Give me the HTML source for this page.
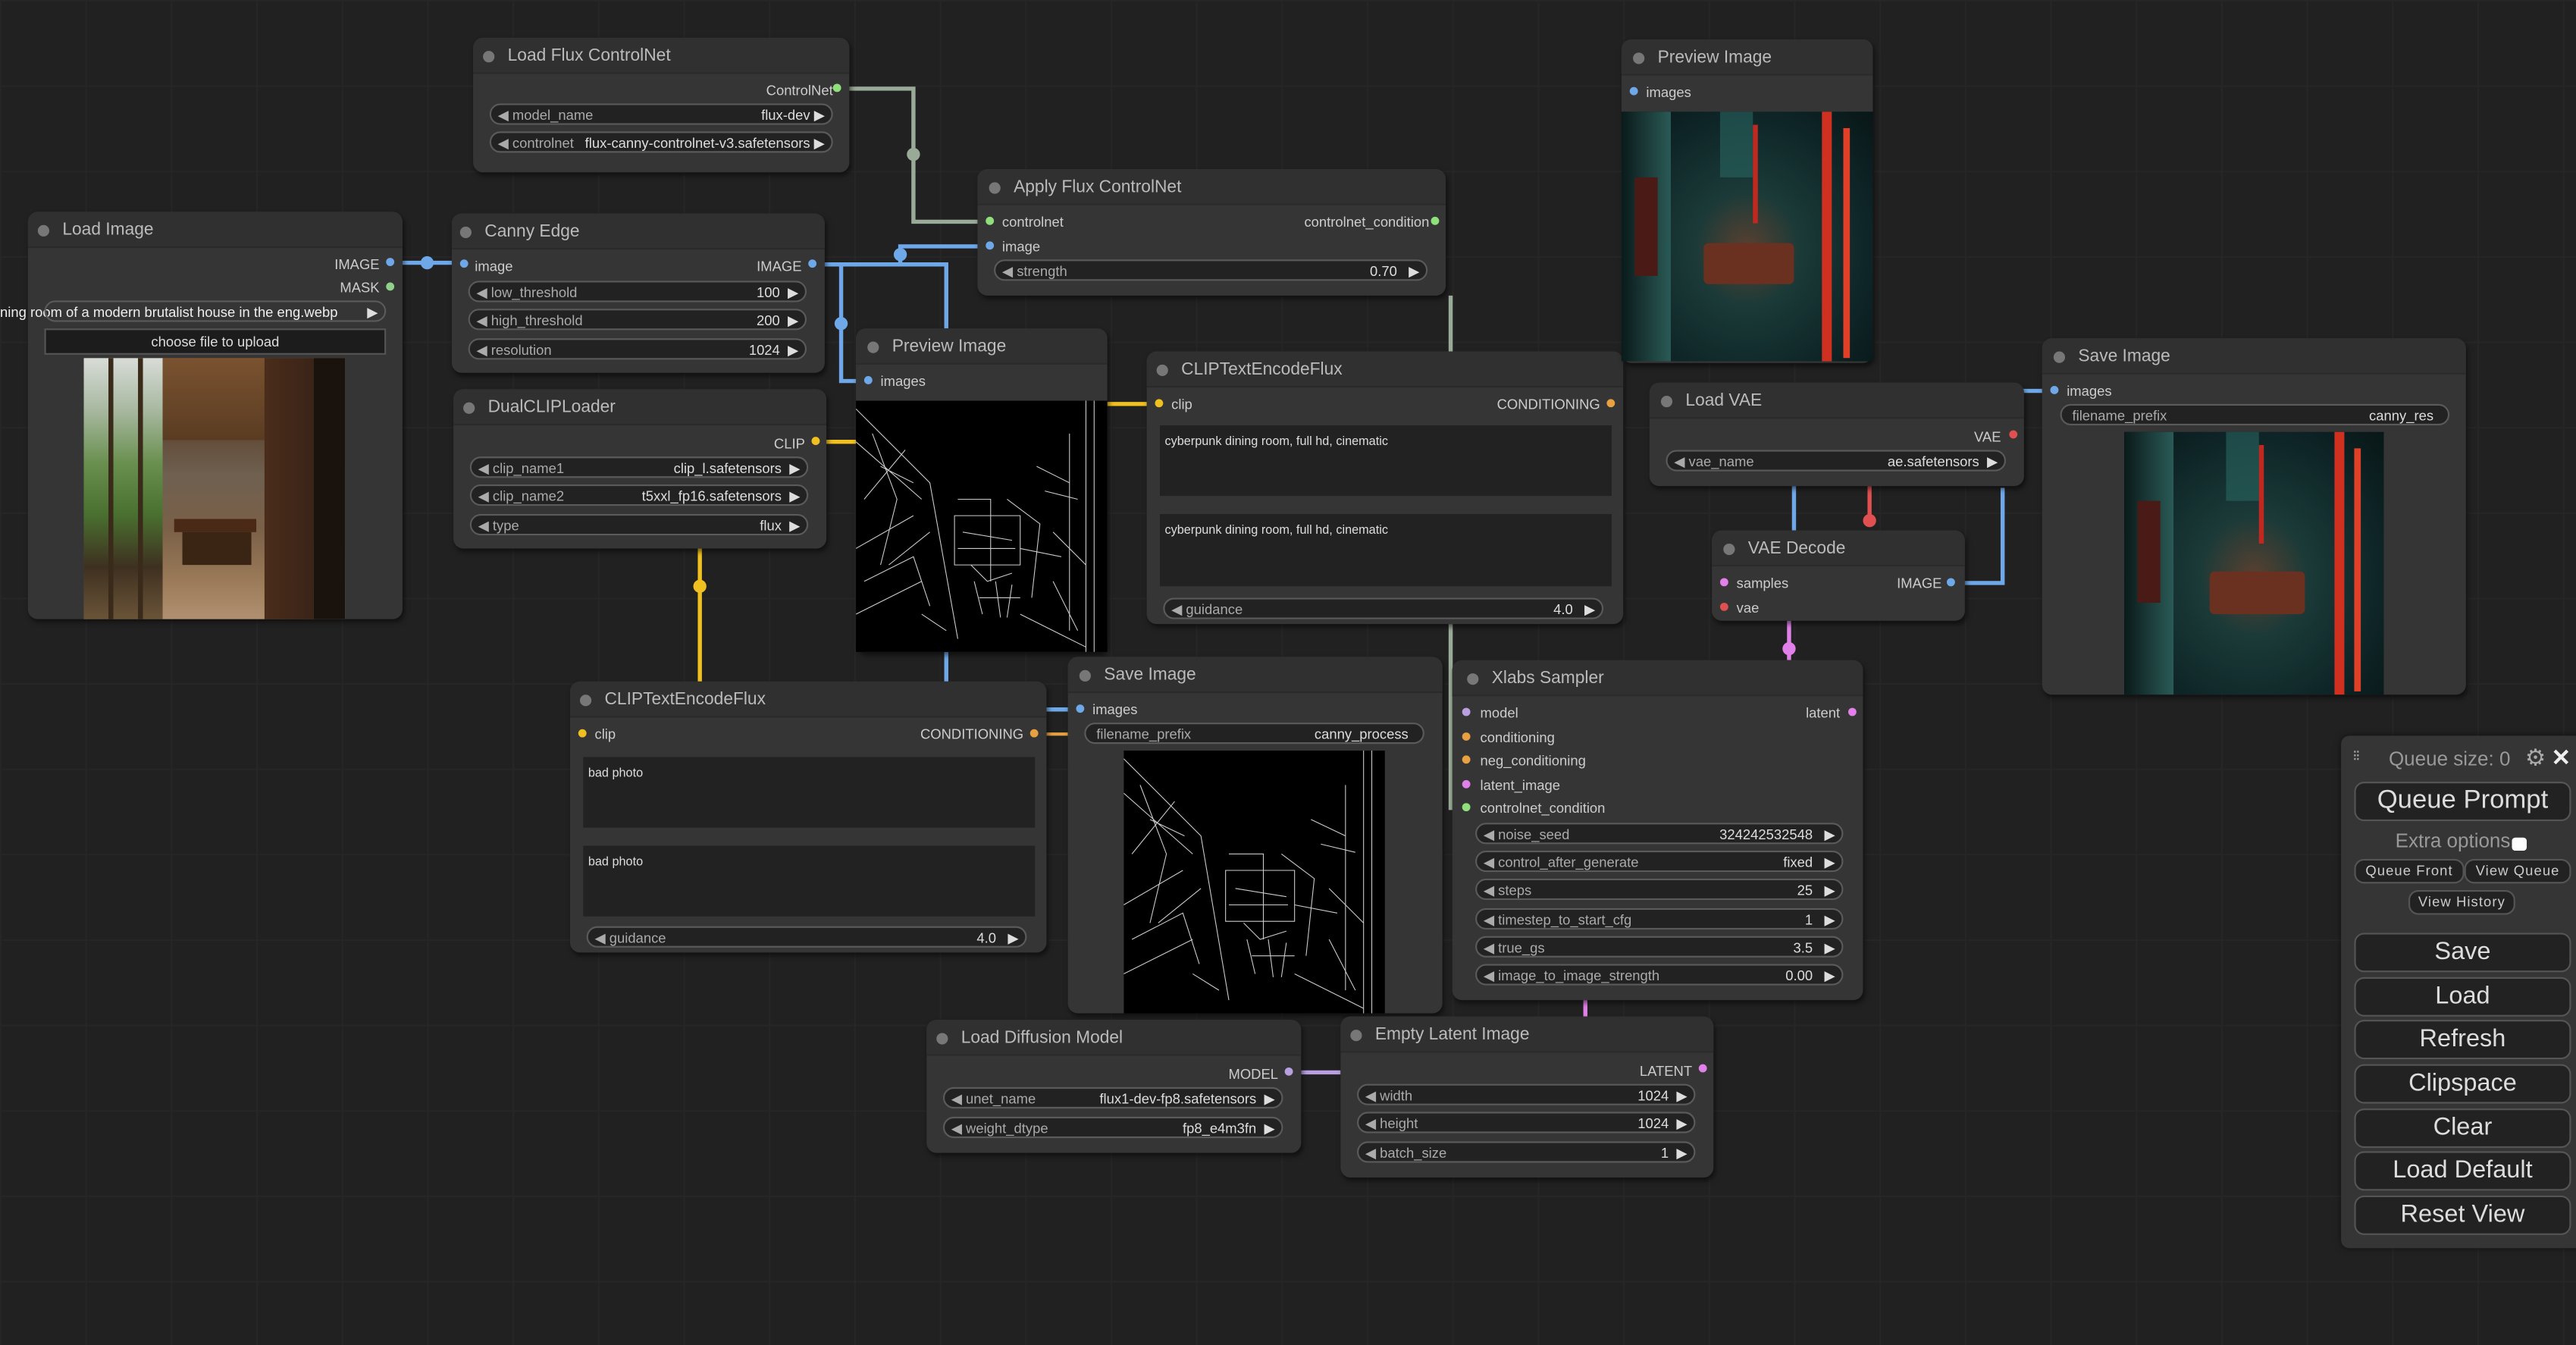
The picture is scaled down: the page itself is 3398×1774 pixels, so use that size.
<!DOCTYPE html>
<html><head><meta charset="utf-8"><style>
html,body{margin:0;padding:0;background:#202020;overflow:hidden}
#c{position:absolute;left:0;top:0;width:1568px;height:819px;transform:scale(2.16709,2.16606);transform-origin:0 0;background-color:#212121;
background-image:linear-gradient(#262626 1px,transparent 1px),linear-gradient(90deg,#262626 1px,transparent 1px);background-size:52px 52px;
font-family:"Liberation Sans",sans-serif;overflow:hidden}
.n{position:absolute;background:#353535;border-radius:6px;box-shadow:1px 2px 3px rgba(0,0,0,.5)}
.n:before{content:"";position:absolute;left:0;right:0;top:0;height:21px;background:#303030;border-radius:6px 6px 0 0;border-bottom:1px solid #2a2a2a}
.t{position:absolute;font-size:10.5px;color:#bbb;white-space:nowrap}
.t:before{content:"";position:absolute;left:-15px;top:3px;width:7px;height:7px;border-radius:50%;background:#777}
.s{position:absolute;font-size:8.5px;color:#ccc;white-space:nowrap;line-height:10px}
.d{position:absolute;width:5px;height:5px;border-radius:50%}
.w{position:absolute;height:13px;border:1px solid #5a5a5a;background:#222;border-radius:7px;box-sizing:border-box;font-size:8.5px;color:#aaa;white-space:nowrap;overflow:hidden}
.w .l{position:absolute;left:4px;top:1px;line-height:10px}
.w .v{position:absolute;right:4px;top:1px;line-height:10px;color:#ddd}
.ta{position:absolute;background:#222;font-size:7.5px;color:#ddd;padding:5px 3px;box-sizing:border-box}
.b{position:absolute;border:1px solid #555;background:#222;border-radius:6px;box-sizing:border-box;color:#ddd;text-align:center;font-family:"Liberation Sans",sans-serif}
</style></head><body><div id="c">

<svg width="1568" height="819" style="position:absolute;left:0;top:0" fill="none">
<g stroke="#6ea8e8" stroke-width="2.5">
<path d="M238 160H282"/><path d="M495 161H576V200"/><path d="M512 161V232H529"/><path d="M548 161V150H603"/><path d="M576 397V415"/><path d="M637 432H657"/>
<path d="M1188 355H1219V297"/><path d="M1219 238H1250"/><path d="M1092 296V323"/>
</g>
<g fill="#6ea8e8"><circle cx="260" cy="160" r="4"/><circle cx="548" cy="155" r="4"/><circle cx="512" cy="197" r="4"/></g>
<path d="M510 54H556V135H603" stroke="#9aaa98" stroke-width="2.5"/><circle cx="556" cy="94" r="4" fill="#9aaa98"/>
<path d="M883 180V214M883 380V492H893" stroke="#9aaa98" stroke-width="2.5"/>
<g stroke="#f0c020" stroke-width="2.5"><path d="M497 269H521"/><path d="M674 246H705"/><path d="M426 334V415"/></g>
<circle cx="426" cy="357" r="4" fill="#f0c020"/>
<g stroke="#e8a040" stroke-width="2"><path d="M637 447H650"/><path d="M888 449H893M888 463H893"/></g>
<path d="M1138 296V318" stroke="#e05050" stroke-width="2.5"/><circle cx="1138" cy="317" r="4" fill="#e05050"/>
<path d="M1089 378V402" stroke="#e080e8" stroke-width="2.5"/><circle cx="1089" cy="395" r="4" fill="#e080e8"/>
<path d="M965 609V619" stroke="#e080e8" stroke-width="2.5"/>
<path d="M792 653H816" stroke="#b8a0e0" stroke-width="2.5"/>
</svg>

<!-- Load Flux ControlNet -->
<div class="n" style="left:288px;top:23px;width:229px;height:82px"></div>
<div class="t" style="left:309px;top:28px">Load Flux ControlNet</div>
<div class="s" style="right:1061px;top:50px">ControlNet</div><div class="d" style="left:507px;top:51px;background:#8fe07a"></div>
<div class="w" style="left:298px;top:63px;width:209px"><span class="l">◀ model_name</span><span class="v">flux-dev ▶</span></div>
<div class="w" style="left:298px;top:80px;width:209px"><span class="l">◀ controlnet</span><span class="v">flux-canny-controlnet-v3.safetensors ▶</span></div>

<!-- Load Image -->
<div class="n" style="left:17px;top:129px;width:228px;height:248px"></div>
<div class="t" style="left:38px;top:134px">Load Image</div>
<div class="s" style="right:1337px;top:156px">IMAGE</div><div class="d" style="left:235px;top:157px;background:#6ea8e8"></div>
<div class="s" style="right:1337px;top:170px">MASK</div><div class="d" style="left:235px;top:172px;background:#8fd08a"></div>
<div class="s" style="left:0;top:185px;color:#eee">ning room of a modern brutalist house in the eng.webp</div>
<div class="w" style="left:27px;top:183px;width:208px;background:transparent"><span class="v">▶</span></div>
<div class="b" style="left:27px;top:200px;width:208px;height:16px;border-radius:0;font-size:8.5px;line-height:14px;background:#1c1c1c">choose file to upload</div>
<div style="position:absolute;left:51px;top:218px;width:159px;height:159px;overflow:hidden;background:linear-gradient(180deg,#6a4a2c 0%,#5a3e28 20%,#6f6050 45%,#7a6048 65%,#9a7a58 85%,#b09070 100%)">
<div style="position:absolute;left:0;top:0;width:48px;height:159px;background:linear-gradient(180deg,#d8dcd8 0%,#a8b8a0 20%,#6a9050 40%,#4a7030 60%,#3e3020 80%,#6a5438 100%)"></div>
<div style="position:absolute;left:15px;top:0;width:3px;height:159px;background:#3a2a1a"></div>
<div style="position:absolute;left:33px;top:0;width:3px;height:159px;background:#3a2a1a"></div>
<div style="position:absolute;left:48px;top:0;width:62px;height:50px;background:linear-gradient(180deg,#7a5230,#5a3c22)"></div>
<div style="position:absolute;left:110px;top:0;width:30px;height:159px;background:linear-gradient(90deg,#4a2c1a,#3a2418)"></div>
<div style="position:absolute;left:140px;top:0;width:19px;height:159px;background:#1a120c"></div>
<div style="position:absolute;left:55px;top:98px;width:50px;height:8px;background:#4a2a16"></div>
<div style="position:absolute;left:60px;top:106px;width:42px;height:20px;background:#3a2414"></div>
</div>

<!-- Canny Edge -->
<div class="n" style="left:275px;top:130px;width:227px;height:97px"></div>
<div class="t" style="left:295px;top:135px">Canny Edge</div>
<div class="d" style="left:280px;top:158px;background:#6ea8e8"></div><div class="s" style="left:289px;top:157px">image</div>
<div class="s" style="right:1080px;top:157px">IMAGE</div><div class="d" style="left:492px;top:158px;background:#6ea8e8"></div>
<div class="w" style="left:285px;top:171px;width:206px"><span class="l">◀ low_threshold</span><span class="v">100 &nbsp;▶</span></div>
<div class="w" style="left:285px;top:188px;width:206px"><span class="l">◀ high_threshold</span><span class="v">200 &nbsp;▶</span></div>
<div class="w" style="left:285px;top:206px;width:206px"><span class="l">◀ resolution</span><span class="v">1024 &nbsp;▶</span></div>

<!-- DualCLIPLoader -->
<div class="n" style="left:276px;top:237px;width:227px;height:97px"></div>
<div class="t" style="left:297px;top:242px">DualCLIPLoader</div>
<div class="s" style="right:1078px;top:265px">CLIP</div><div class="d" style="left:494px;top:266px;background:#f0c020"></div>
<div class="w" style="left:286px;top:278px;width:206px"><span class="l">◀ clip_name1</span><span class="v">clip_l.safetensors &nbsp;▶</span></div>
<div class="w" style="left:286px;top:295px;width:206px"><span class="l">◀ clip_name2</span><span class="v">t5xxl_fp16.safetensors &nbsp;▶</span></div>
<div class="w" style="left:286px;top:313px;width:206px"><span class="l">◀ type</span><span class="v">flux &nbsp;▶</span></div>

<!-- Preview Image canny -->
<div class="n" style="left:521px;top:200px;width:153px;height:197px"></div>
<div class="t" style="left:543px;top:205px">Preview Image</div>
<div class="d" style="left:526px;top:229px;background:#6ea8e8"></div><div class="s" style="left:536px;top:227px">images</div>
<svg style="position:absolute;left:521px;top:244px" width="153" height="153"><rect width="153" height="153" fill="#000"/>
<g stroke="#ccc" stroke-width=".5" fill="none"><path d="M0 5L45 50L62 145M0 25L40 60M5 60L30 30M20 100L45 80M0 130L40 110M0 90L35 70M62 60L82 60L82 110M92 60L112 75L107 120M120 80L140 100M100 130L140 150M130 20V140M145 0V153M140 0V153M70 100l10 10l15-5M10 20l15 40l-10 40M60 70h40v30h-40zM65 80l30 5M62 90h35M72 110l5 20M85 110l3 22M95 112l-3 20M75 120h25M15 40l20 10M5 110l30-15l10 30M40 130l15 10M110 40l20 10M115 55l20 5M100 90l25 5M120 110l15 30"/></g></svg>

<!-- Apply Flux ControlNet -->
<div class="n" style="left:595px;top:103px;width:285px;height:77px"></div>
<div class="t" style="left:617px;top:108px">Apply Flux ControlNet</div>
<div class="d" style="left:600px;top:132px;background:#8fe07a"></div><div class="s" style="left:610px;top:130px">controlnet</div>
<div class="s" style="right:698px;top:130px">controlnet_condition</div><div class="d" style="left:871px;top:132px;background:#8fe07a"></div>
<div class="d" style="left:600px;top:147px;background:#6ea8e8"></div><div class="s" style="left:610px;top:145px">image</div>
<div class="w" style="left:605px;top:158px;width:264px"><span class="l">◀ strength</span><span class="v">0.70 &nbsp;&nbsp;▶</span></div>

<!-- CLIPTextEncodeFlux top -->
<div class="n" style="left:698px;top:214px;width:290px;height:166px"></div>
<div class="t" style="left:719px;top:219px">CLIPTextEncodeFlux</div>
<div class="d" style="left:703px;top:243px;background:#f0c020"></div><div class="s" style="left:713px;top:241px">clip</div>
<div class="s" style="right:594px;top:241px">CONDITIONING</div><div class="d" style="left:978px;top:243px;background:#e8a040"></div>
<div class="ta" style="left:706px;top:259px;width:275px;height:43px">cyberpunk dining room, full hd, cinematic</div>
<div class="ta" style="left:706px;top:313px;width:275px;height:44px">cyberpunk dining room, full hd, cinematic</div>
<div class="w" style="left:708px;top:364px;width:268px"><span class="l">◀ guidance</span><span class="v">4.0 &nbsp;&nbsp;▶</span></div>

<!-- Preview Image top right -->
<div class="n" style="left:987px;top:24px;width:153px;height:197px"></div>
<div class="t" style="left:1009px;top:29px">Preview Image</div>
<div class="d" style="left:992px;top:53px;background:#6ea8e8"></div><div class="s" style="left:1002px;top:51px">images</div>
<div style="position:absolute;left:987px;top:68px;width:153px;height:152px;overflow:hidden;background:radial-gradient(ellipse at 50% 55%,#5a4030 0%,#1a3a38 30%,#0e2426 70%,#081616 100%)">
<div style="position:absolute;left:0;top:0;width:30px;height:152px;background:linear-gradient(90deg,#0a1a1a,#2a5a56)"></div>
<div style="position:absolute;left:8px;top:40px;width:14px;height:60px;background:#4a1a16"></div>
<div style="position:absolute;left:122px;top:0;width:6px;height:152px;background:#d03020"></div>
<div style="position:absolute;left:135px;top:10px;width:4px;height:140px;background:#e04028"></div>
<div style="position:absolute;left:80px;top:8px;width:3px;height:60px;background:#c02820"></div>
<div style="position:absolute;left:60px;top:0;width:20px;height:40px;background:#2a6660;opacity:.6"></div>
<div style="position:absolute;left:50px;top:80px;width:55px;height:25px;background:#6a3020;border-radius:3px"></div>
</div>

<!-- Load VAE -->
<div class="n" style="left:1004px;top:233px;width:228px;height:63px"></div>
<div class="t" style="left:1026px;top:238px">Load VAE</div>
<div class="s" style="right:350px;top:261px">VAE</div><div class="d" style="left:1223px;top:262px;background:#e05050"></div>
<div class="w" style="left:1014px;top:274px;width:207px"><span class="l">◀ vae_name</span><span class="v">ae.safetensors &nbsp;▶</span></div>

<!-- Save Image right -->
<div class="n" style="left:1243px;top:206px;width:258px;height:217px"></div>
<div class="t" style="left:1265px;top:211px">Save Image</div>
<div class="d" style="left:1248px;top:235px;background:#6ea8e8"></div><div class="s" style="left:1258px;top:233px">images</div>
<div class="w" style="left:1254px;top:246px;width:237px"><span class="l">&nbsp;filename_prefix</span><span class="v">canny_res &nbsp;</span></div>
<div style="position:absolute;left:1293px;top:263px;width:158px;height:160px;overflow:hidden;background:radial-gradient(ellipse at 50% 55%,#5a4030 0%,#1a3a38 30%,#0e2426 70%,#081616 100%)">
<div style="position:absolute;left:0;top:0;width:30px;height:160px;background:linear-gradient(90deg,#0a1a1a,#2a5a56)"></div>
<div style="position:absolute;left:8px;top:42px;width:14px;height:62px;background:#4a1a16"></div>
<div style="position:absolute;left:128px;top:0;width:6px;height:160px;background:#d03020"></div>
<div style="position:absolute;left:140px;top:10px;width:4px;height:148px;background:#e04028"></div>
<div style="position:absolute;left:82px;top:8px;width:3px;height:60px;background:#c02820"></div>
<div style="position:absolute;left:62px;top:0;width:20px;height:42px;background:#2a6660;opacity:.6"></div>
<div style="position:absolute;left:52px;top:85px;width:58px;height:26px;background:#6a3020;border-radius:3px"></div>
</div>

<!-- VAE Decode -->
<div class="n" style="left:1042px;top:323px;width:154px;height:55px"></div>
<div class="t" style="left:1064px;top:328px">VAE Decode</div>
<div class="d" style="left:1047px;top:352px;background:#e080e8"></div><div class="s" style="left:1057px;top:350px">samples</div>
<div class="s" style="right:386px;top:350px">IMAGE</div><div class="d" style="left:1185px;top:352px;background:#6ea8e8"></div>
<div class="d" style="left:1047px;top:367px;background:#e05050"></div><div class="s" style="left:1057px;top:365px">vae</div>

<!-- CLIPTextEncodeFlux bottom -->
<div class="n" style="left:347px;top:415px;width:290px;height:165px"></div>
<div class="t" style="left:368px;top:420px">CLIPTextEncodeFlux</div>
<div class="d" style="left:352px;top:444px;background:#f0c020"></div><div class="s" style="left:362px;top:442px">clip</div>
<div class="s" style="right:945px;top:442px">CONDITIONING</div><div class="d" style="left:627px;top:444px;background:#e8a040"></div>
<div class="ta" style="left:355px;top:461px;width:275px;height:43px">bad photo</div>
<div class="ta" style="left:355px;top:515px;width:275px;height:43px">bad photo</div>
<div class="w" style="left:357px;top:564px;width:268px"><span class="l">◀ guidance</span><span class="v">4.0 &nbsp;&nbsp;▶</span></div>

<!-- Save Image middle -->
<div class="n" style="left:650px;top:400px;width:228px;height:217px"></div>
<div class="t" style="left:672px;top:405px">Save Image</div>
<div class="d" style="left:655px;top:429px;background:#6ea8e8"></div><div class="s" style="left:665px;top:427px">images</div>
<div class="w" style="left:660px;top:440px;width:207px"><span class="l">&nbsp;filename_prefix</span><span class="v">canny_process &nbsp;</span></div>
<svg style="position:absolute;left:684px;top:457px" width="159" height="160"><rect width="159" height="160" fill="#000"/>
<g stroke="#ccc" stroke-width=".5" fill="none"><path d="M0 5L47 52L64 152M0 26L42 63M5 63L31 31M21 105L47 84M0 136L42 115M0 94L36 73M64 63L85 63L85 115M96 63L116 78L111 125M125 84L146 105M104 136L146 157M135 21V146M151 0V160M146 0V160M73 105l10 10l16-5M10 21l16 42l-10 42M62 73h42v31h-42zM68 84l31 5M64 94h36M75 115l5 21M88 115l3 23M99 117l-3 21M78 125h26M16 42l21 10M5 115l31-16l10 31M42 136l16 10M114 42l21 10M120 57l21 5M104 94l26 5M125 115l16 31"/></g></svg>

<!-- Xlabs Sampler -->
<div class="n" style="left:884px;top:402px;width:250px;height:207px"></div>
<div class="t" style="left:908px;top:407px">Xlabs Sampler</div>
<div class="d" style="left:890px;top:431px;background:#b8a0e0"></div><div class="s" style="left:901px;top:429px">model</div>
<div class="s" style="right:448px;top:429px">latent</div><div class="d" style="left:1125px;top:431px;background:#e080e8"></div>
<div class="d" style="left:890px;top:446px;background:#e8a040"></div><div class="s" style="left:901px;top:444px">conditioning</div>
<div class="d" style="left:890px;top:460px;background:#e8a040"></div><div class="s" style="left:901px;top:458px">neg_conditioning</div>
<div class="d" style="left:890px;top:475px;background:#e080e8"></div><div class="s" style="left:901px;top:473px">latent_image</div>
<div class="d" style="left:890px;top:489px;background:#8fe07a"></div><div class="s" style="left:901px;top:487px">controlnet_condition</div>
<div class="w" style="left:898px;top:501px;width:224px"><span class="l">◀ noise_seed</span><span class="v">324242532548 &nbsp;&nbsp;▶</span></div>
<div class="w" style="left:898px;top:518px;width:224px"><span class="l">◀ control_after_generate</span><span class="v">fixed &nbsp;&nbsp;▶</span></div>
<div class="w" style="left:898px;top:535px;width:224px"><span class="l">◀ steps</span><span class="v">25 &nbsp;&nbsp;▶</span></div>
<div class="w" style="left:898px;top:553px;width:224px"><span class="l">◀ timestep_to_start_cfg</span><span class="v">1 &nbsp;&nbsp;▶</span></div>
<div class="w" style="left:898px;top:570px;width:224px"><span class="l">◀ true_gs</span><span class="v">3.5 &nbsp;&nbsp;▶</span></div>
<div class="w" style="left:898px;top:587px;width:224px"><span class="l">◀ image_to_image_strength</span><span class="v">0.00 &nbsp;&nbsp;▶</span></div>

<!-- Load Diffusion Model -->
<div class="n" style="left:564px;top:621px;width:228px;height:81px"></div>
<div class="t" style="left:585px;top:626px">Load Diffusion Model</div>
<div class="s" style="right:790px;top:649px">MODEL</div><div class="d" style="left:782px;top:650px;background:#b8a0e0"></div>
<div class="w" style="left:574px;top:662px;width:207px"><span class="l">◀ unet_name</span><span class="v">flux1-dev-fp8.safetensors &nbsp;▶</span></div>
<div class="w" style="left:574px;top:680px;width:207px"><span class="l">◀ weight_dtype</span><span class="v">fp8_e4m3fn &nbsp;▶</span></div>

<!-- Empty Latent Image -->
<div class="n" style="left:816px;top:619px;width:227px;height:98px"></div>
<div class="t" style="left:837px;top:624px">Empty Latent Image</div>
<div class="s" style="right:538px;top:647px">LATENT</div><div class="d" style="left:1034px;top:648px;background:#e080e8"></div>
<div class="w" style="left:826px;top:660px;width:206px"><span class="l">◀ width</span><span class="v">1024 &nbsp;▶</span></div>
<div class="w" style="left:826px;top:677px;width:206px"><span class="l">◀ height</span><span class="v">1024 &nbsp;▶</span></div>
<div class="w" style="left:826px;top:695px;width:206px"><span class="l">◀ batch_size</span><span class="v">1 &nbsp;▶</span></div>

<!-- Panel -->
<div style="position:absolute;left:1425px;top:448px;width:150px;height:312px;background:#353535;border-radius:5px;box-shadow:0 0 4px rgba(0,0,0,.5)"></div>
<div style="position:absolute;left:1432px;top:455px;font-size:9px;color:#aaa;letter-spacing:-1px">⁝⁝</div>
<div style="position:absolute;left:1454px;top:455px;font-size:12px;color:#999">Queue size: 0</div>
<div style="position:absolute;left:1537px;top:453px;font-size:14px;color:#aaa">⚙</div>
<div style="position:absolute;left:1553px;top:453px;font-size:14px;color:#eee;font-weight:bold">✕</div>
<div class="b" style="left:1433px;top:476px;width:132px;height:24px;font-size:16px;line-height:22px">Queue Prompt</div>
<div style="position:absolute;left:1458px;top:505px;font-size:12px;color:#999">Extra options</div>
<div style="position:absolute;left:1529px;top:510px;width:9px;height:8px;background:#fff;border-radius:2px"></div>
<div class="b" style="left:1433px;top:523px;width:67px;height:15px;font-size:8.5px;line-height:13px;letter-spacing:.5px;color:#ccc">Queue Front</div>
<div class="b" style="left:1500px;top:523px;width:65px;height:15px;font-size:8.5px;line-height:13px;letter-spacing:.5px;color:#ccc">View Queue</div>
<div class="b" style="left:1466px;top:542px;width:65px;height:15px;font-size:8.5px;line-height:13px;letter-spacing:.5px;color:#ccc">View History</div>
<div class="b" style="left:1433px;top:568px;width:132px;height:24px;font-size:15px;line-height:22px">Save</div>
<div class="b" style="left:1433px;top:595px;width:132px;height:24px;font-size:15px;line-height:22px">Load</div>
<div class="b" style="left:1433px;top:621px;width:132px;height:24px;font-size:15px;line-height:22px">Refresh</div>
<div class="b" style="left:1433px;top:648px;width:132px;height:24px;font-size:15px;line-height:22px">Clipspace</div>
<div class="b" style="left:1433px;top:675px;width:132px;height:24px;font-size:15px;line-height:22px">Clear</div>
<div class="b" style="left:1433px;top:701px;width:132px;height:24px;font-size:15px;line-height:22px">Load Default</div>
<div class="b" style="left:1433px;top:728px;width:132px;height:24px;font-size:15px;line-height:22px">Reset View</div>

</div></body></html>
